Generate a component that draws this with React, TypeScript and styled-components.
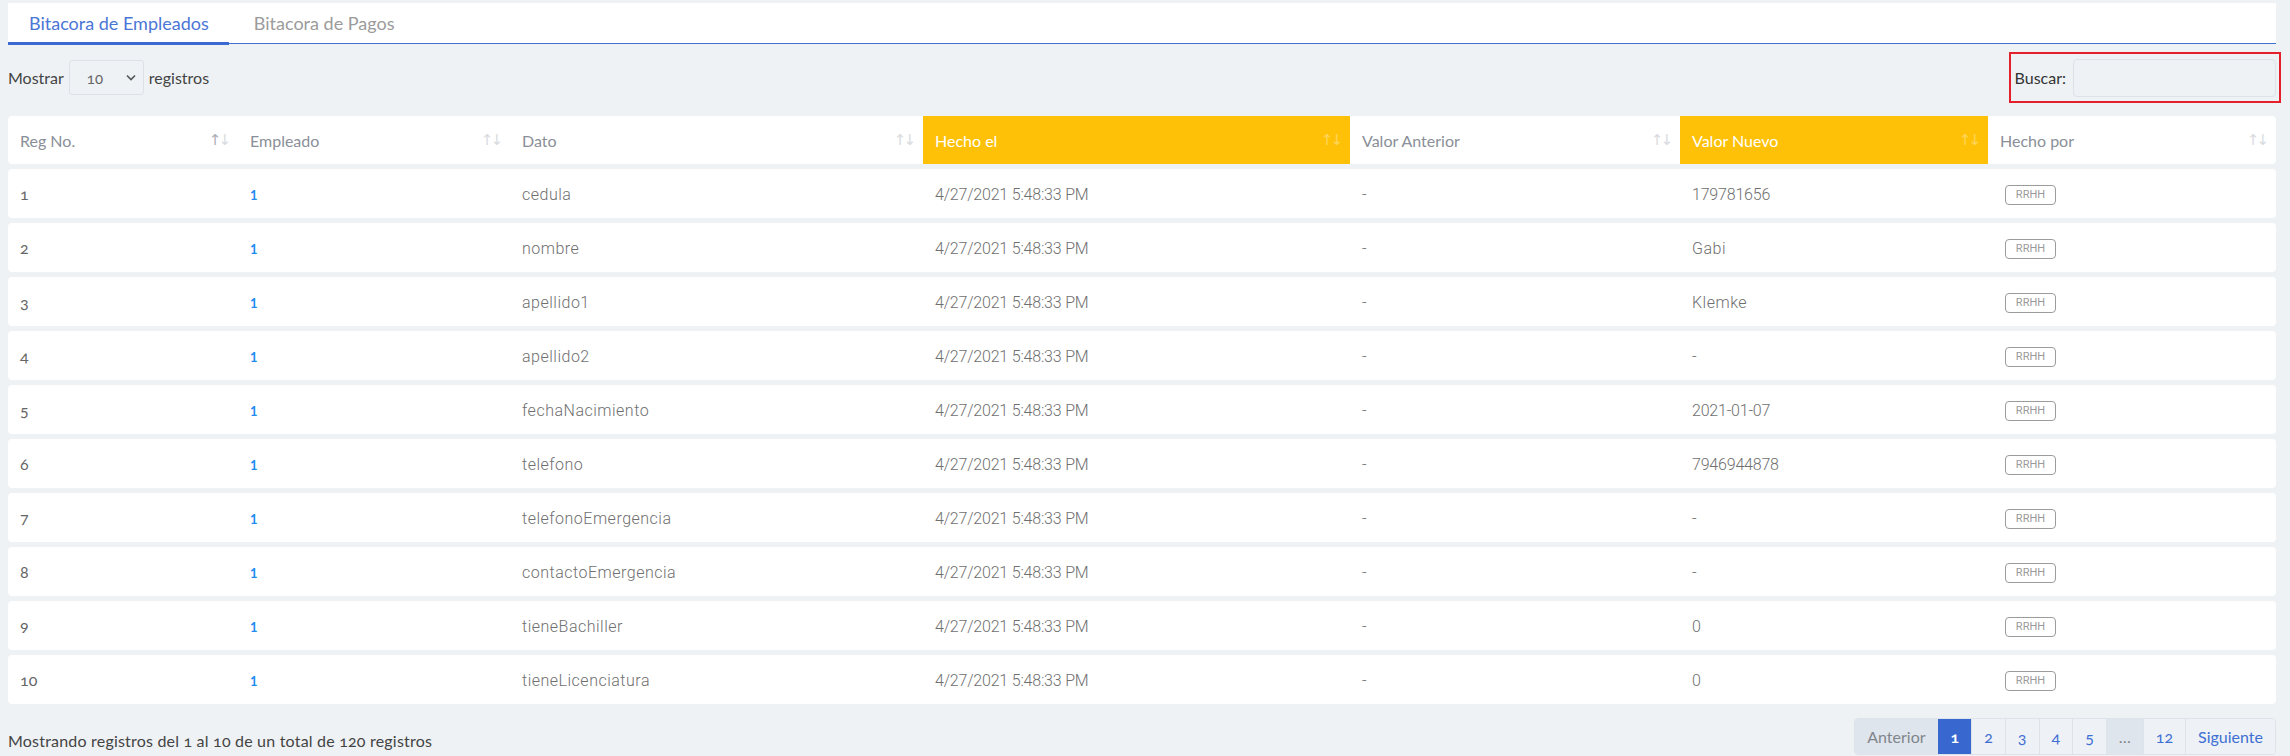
import React from "react";
import styled, { createGlobalStyle, css } from "styled-components";

const Global = createGlobalStyle`
  html, body { margin: 0; padding: 0; background: #eef2f5; }
  body { font-family: Lato, "Open Sans", sans-serif; color: #444; }
  * { box-sizing: border-box; }
`;

const Page = styled.div`
  width: 2268px;
  margin-left: 8px;
  padding-top: 3px;
`;

const TabBar = styled.nav`
  display: flex;
  height: 41px;
  background: #fff;
  border-bottom: 1px solid #3f6fd3;
`;

const Tab = styled.div<{ $active?: boolean }>`
  position: relative;
  display: flex;
  align-items: center;
  padding: 0 20px 0 21px;
  font-size: 18px;
  color: ${(p) => (p.$active ? "#4a76d6" : "#9b9b9b")};
  & + & { padding-left: 25px; }
  ${(p) =>
    p.$active &&
    css`
      &::after {
        content: "";
        position: absolute;
        left: 0;
        right: 0;
        bottom: -2px;
        height: 3px;
        background: #3b6bd2;
      }
    `}
`;

const Toolbar = styled.div`
  display: flex;
  justify-content: space-between;
  align-items: center;
  margin-top: 13px;
  height: 41px;
`;

const Length = styled.label`
  display: flex;
  align-items: center;
  gap: 5px;
  font-size: 16px;
  color: #444;
`;

const SelectBox = styled.div`
  position: relative;
  display: flex;
  align-items: center;
  width: 75px;
  height: 35px;
  padding-left: 17px;
  border: 1px solid #dde2e8;
  border-radius: 3px;
  font-size: 15px;
  color: #666;
  font-variant-numeric: oldstyle-nums;
`;

const Chevron = styled.svg`
  position: absolute;
  right: 7px;
  top: 50%;
  margin-top: -4px;
`;

const SearchWrap = styled.label`
  display: flex;
  align-items: center;
  gap: 7px;
  height: 41px;
  padding-left: 1px;
  outline: 2px solid #e3202b;
  outline-offset: 3px;
  font-size: 16px;
  color: #333;
`;

const SearchInput = styled.input`
  width: 203px;
  height: 38px;
  border: 1px solid #dde2e8;
  border-radius: 4px;
  background: transparent;
  outline: none;
`;

const Table = styled.table`
  width: 2268px;
  margin-top: 13px;
  border-collapse: separate;
  border-spacing: 0 5px;
  table-layout: fixed;
`;

const Th = styled.th<{ $hl?: boolean }>`
  height: 48px;
  padding: 0 7px 0 12px;
  text-align: left;
  font-weight: 400;
  font-size: 16px;
  color: ${(p) => (p.$hl ? "#ffffff" : "#8a8f98")};
  background: ${(p) => (p.$hl ? "#ffc107" : "#ffffff")};
  &:first-child { border-radius: 4px 0 0 4px; }
  &:last-child { border-radius: 0 4px 4px 0; }
`;

const HeadInner = styled.div`
  display: flex;
  align-items: center;
  justify-content: space-between;
`;

const Sort = styled.span<{ $hl?: boolean; $asc?: boolean }>`
  display: flex;
  font-family: "DejaVu Sans", sans-serif;
  font-size: 15px;
  letter-spacing: -3px;
  padding-right: 3px;
  color: ${(p) => (p.$hl ? "rgba(255,255,255,0.35)" : "#d8dbdf")};
  & > span:first-child {
    color: ${(p) => (p.$asc ? "#a9aeb5" : "inherit")};
  }
`;

const Td = styled.td`
  height: 49px;
  padding: 0 12px;
  background: #fff;
  color: #7d7d7d;
  &:first-child { border-radius: 4px 0 0 4px; }
  &:last-child { border-radius: 0 4px 4px 0; }
`;

const RegNo = styled.span`
  font-size: 16px;
  color: #666;
  font-variant-numeric: oldstyle-nums;
`;

const EmpLink = styled.a`
  font-size: 13px;
  font-weight: 700;
  color: #1f8cf0;
  text-decoration: none;
`;

const Data = styled.span<{ $num?: boolean }>`
  font-family: Roboto, sans-serif;
  font-weight: 300;
  font-size: 16px;
  letter-spacing: ${(p) => (p.$num ? "-0.2px" : "0.5px")};
  color: #6f6f6f;
`;

const Badge = styled.span`
  display: inline-flex;
  align-items: center;
  justify-content: center;
  width: 51px;
  height: 20px;
  margin-left: 5px;
  border: 1px solid #9c9c9c;
  border-radius: 4px;
  font-family: Roboto, sans-serif;
  font-size: 11px;
  color: #9a9a9a;
`;

const Footer = styled.div`
  display: flex;
  justify-content: space-between;
  align-items: center;
  margin-top: 9px;
`;

const Info = styled.div`
  padding-top: 8px;
  font-size: 16px;
  letter-spacing: 0.2px;
  color: #444;
  font-variant-numeric: oldstyle-nums;
`;

const Pager = styled.div`
  display: flex;
  height: 37px;
  border: 1px solid #dde3ea;
  border-radius: 4px;
  overflow: hidden;
`;

const PageItem = styled.span<{ $state?: "active" | "disabled" | "normal" }>`
  display: flex;
  align-items: center;
  justify-content: center;
  padding: 0 12px;
  font-size: 16px;
  font-variant-numeric: oldstyle-nums;
  border-left: 1px solid #dde3ea;
  &:first-child { border-left: none; }
  ${(p) =>
    p.$state === "active"
      ? css`
          background: #3767cf;
          color: #fff;
          font-weight: 700;
          border-left-color: #3767cf;
        `
      : p.$state === "disabled"
      ? css`
          background: #dfe5ec;
          color: #7f858c;
        `
      : css`
          background: #eef2f6;
          color: #3f6fd3;
        `}
`;

const columns = [
  { label: "Reg No.", w: 230, asc: true },
  { label: "Empleado", w: 272 },
  { label: "Dato", w: 413 },
  { label: "Hecho el", w: 427, hl: true },
  { label: "Valor Anterior", w: 330 },
  { label: "Valor Nuevo", w: 308, hl: true },
  { label: "Hecho por", w: 288 },
];

const rows: [string, string][] = [
  ["cedula", "179781656"],
  ["nombre", "Gabi"],
  ["apellido1", "Klemke"],
  ["apellido2", "-"],
  ["fechaNacimiento", "2021-01-07"],
  ["telefono", "7946944878"],
  ["telefonoEmergencia", "-"],
  ["contactoEmergencia", "-"],
  ["tieneBachiller", "0"],
  ["tieneLicenciatura", "0"],
];

const isNum = (s: string) => /^[\d-]+$/.test(s);

export default function App() {
  return (
    <>
      <Global />
      <Page>
        <TabBar>
          <Tab $active>Bitacora de Empleados</Tab>
          <Tab>Bitacora de Pagos</Tab>
        </TabBar>

        <Toolbar>
          <Length>
            Mostrar
            <SelectBox>
              10
              <Chevron width="10" height="7" viewBox="0 0 10 7">
                <path d="M1 1.5 L5 5.5 L9 1.5" fill="none" stroke="#555" strokeWidth="1.6" />
              </Chevron>
            </SelectBox>
            registros
          </Length>
          <SearchWrap>
            Buscar:
            <SearchInput type="search" />
          </SearchWrap>
        </Toolbar>

        <Table>
          <colgroup>
            {columns.map((c) => (
              <col key={c.label} style={{ width: c.w }} />
            ))}
          </colgroup>
          <thead>
            <tr>
              {columns.map((c) => (
                <Th key={c.label} $hl={c.hl}>
                  <HeadInner>
                    <span>{c.label}</span>
                    <Sort $hl={c.hl} $asc={c.asc}>
                      <span>↑</span>
                      <span>↓</span>
                    </Sort>
                  </HeadInner>
                </Th>
              ))}
            </tr>
          </thead>
          <tbody>
            {rows.map(([dato, nuevo], i) => (
              <tr key={i}>
                <Td>
                  <RegNo>{i + 1}</RegNo>
                </Td>
                <Td>
                  <EmpLink href="#">1</EmpLink>
                </Td>
                <Td>
                  <Data>{dato}</Data>
                </Td>
                <Td>
                  <Data $num>4/27/2021 5:48:33 PM</Data>
                </Td>
                <Td>
                  <Data>-</Data>
                </Td>
                <Td>
                  <Data $num={isNum(nuevo)}>{nuevo}</Data>
                </Td>
                <Td>
                  <Badge>RRHH</Badge>
                </Td>
              </tr>
            ))}
          </tbody>
        </Table>

        <Footer>
          <Info>Mostrando registros del 1 al 10 de un total de 120 registros</Info>
          <Pager>
            <PageItem $state="disabled">Anterior</PageItem>
            <PageItem $state="active">1</PageItem>
            <PageItem>2</PageItem>
            <PageItem>3</PageItem>
            <PageItem>4</PageItem>
            <PageItem>5</PageItem>
            <PageItem $state="disabled">…</PageItem>
            <PageItem>12</PageItem>
            <PageItem>Siguiente</PageItem>
          </Pager>
        </Footer>
      </Page>
    </>
  );
}
